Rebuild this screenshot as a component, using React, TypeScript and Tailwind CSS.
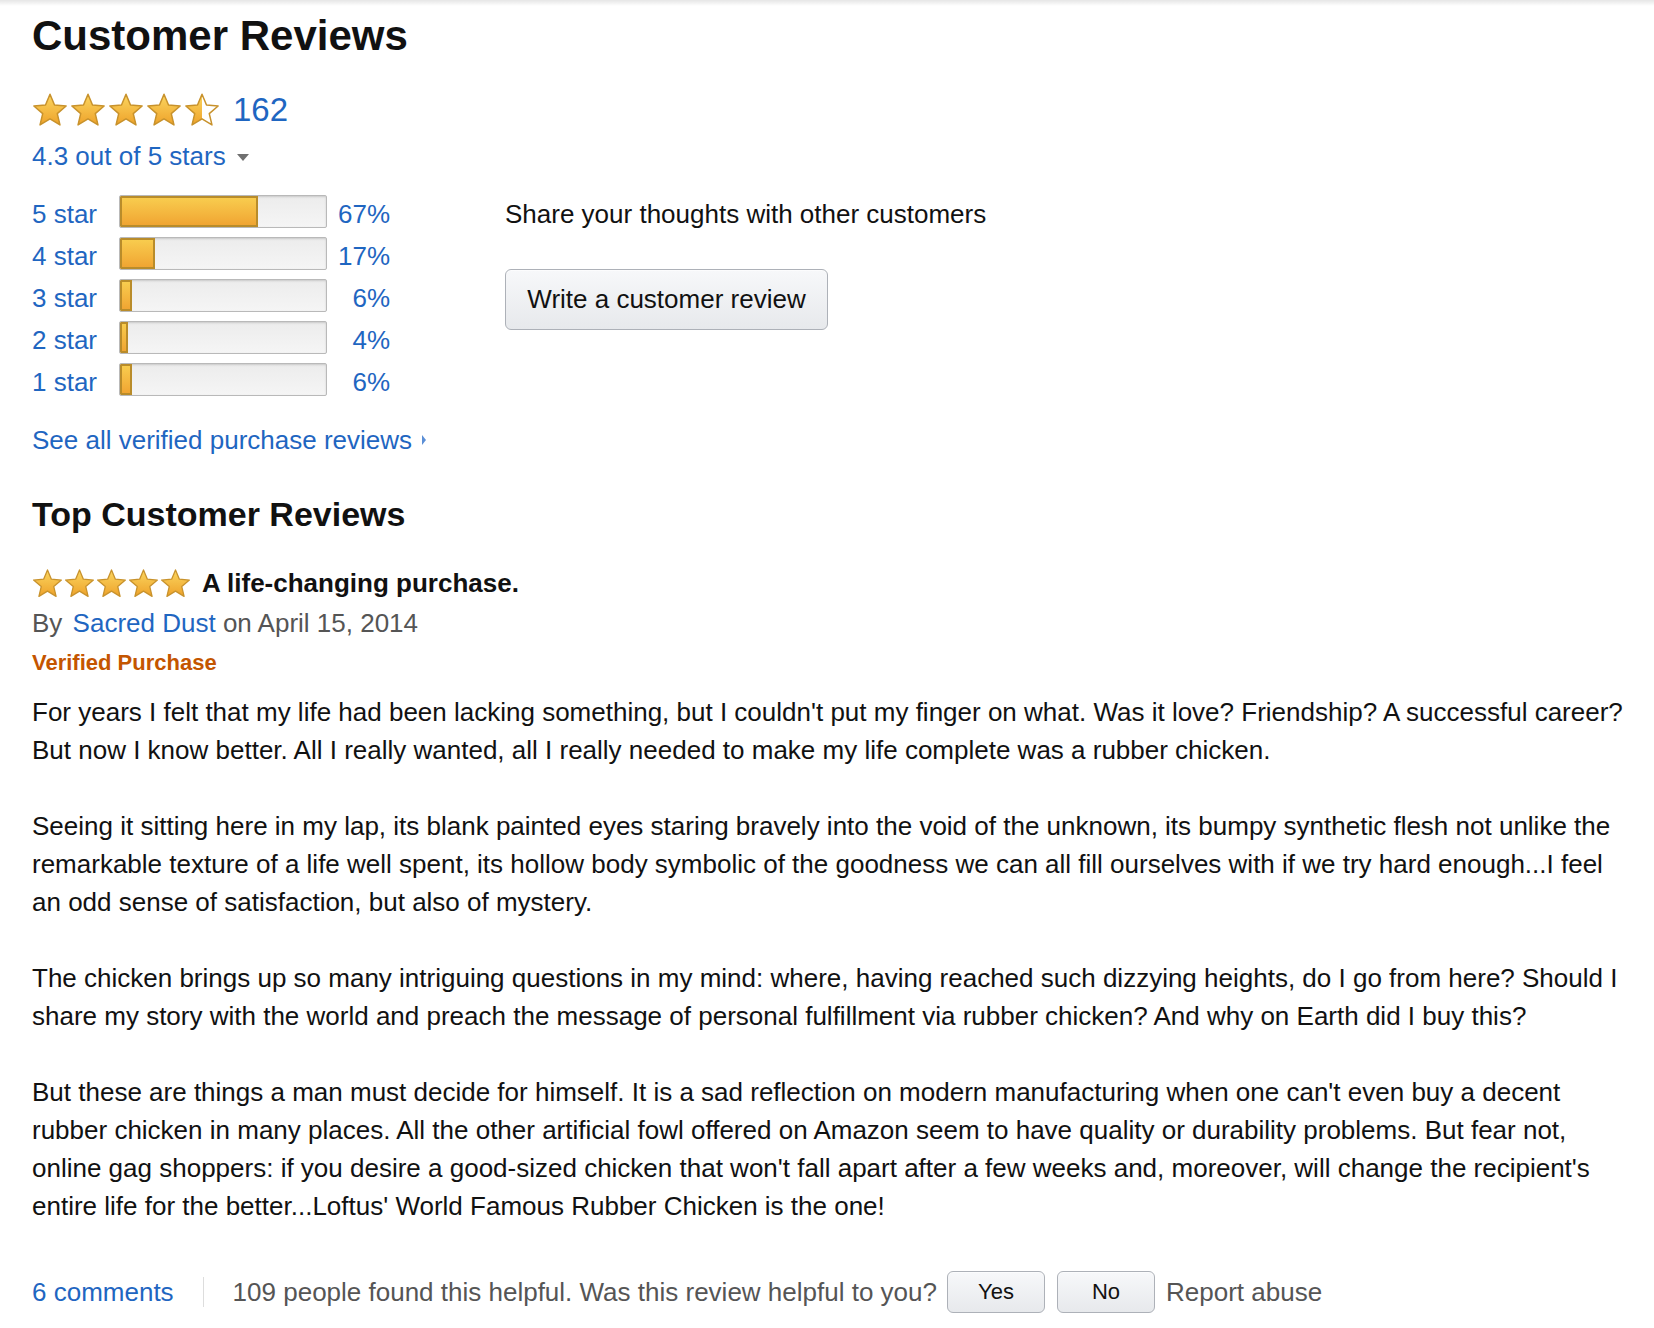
import { useId } from "react";

const histogram = [
  { label: "5 star", pct: 67 },
  { label: "4 star", pct: 17 },
  { label: "3 star", pct: 6 },
  { label: "2 star", pct: 4 },
  { label: "1 star", pct: 6 },
];

const STAR_POINTS =
  "12,1.5 15,8.67 22.75,9.31 16.85,14.38 18.64,21.94 12,17.9 5.36,21.94 7.15,14.38 1.25,9.31 9,8.67";

function Star({ size, half = false }: { size: number; half?: boolean }) {
  const id = useId().replace(/:/g, "");
  return (
    <svg width={size} height={size} viewBox="0 0 24 24" className="block">
      <defs>
        <linearGradient id={`g${id}`} x1="0" y1="0" x2="0" y2="1">
          <stop offset="0%" stopColor="#fbd660" />
          <stop offset="100%" stopColor="#eea22a" />
        </linearGradient>
        <clipPath id={`c${id}`}>
          <rect x="0" y="0" width="12" height="24" />
        </clipPath>
      </defs>
      <polygon points={STAR_POINTS} fill="#ffffff" />
      <polygon
        points={STAR_POINTS}
        fill={`url(#g${id})`}
        clipPath={half ? `url(#c${id})` : undefined}
      />
      <polygon
        points={STAR_POINTS}
        fill="none"
        stroke="#c8922c"
        strokeWidth="1"
        strokeLinejoin="round"
      />
    </svg>
  );
}

function GrayButton({ children, className }: { children: React.ReactNode; className: string }) {
  return (
    <button
      className={`flex items-center justify-center rounded-[6px] border border-[#adb1b8] bg-gradient-to-b from-[#f7f8fa] to-[#e7e9ec] text-[#111] shadow-[inset_0_1px_0_rgba(255,255,255,0.6)] ${className}`}
    >
      {children}
    </button>
  );
}

export default function App() {
  return (
    <div
      className="min-h-[1328px] bg-white text-[#111]"
      style={{ fontFamily: '"Liberation Sans", Arial, sans-serif' }}
    >
      <div className="h-[6px] bg-gradient-to-b from-black/10 to-transparent" />
      <div className="pl-[32px] pr-[28px]">
        <h2 className="pt-[6px] text-[42px] font-bold leading-[48px]">Customer Reviews</h2>

        <div className="mt-[32px] flex h-[36px] items-center">
          <div className="flex gap-[2px]">
            <Star size={36} />
            <Star size={36} />
            <Star size={36} />
            <Star size={36} />
            <Star size={36} half />
          </div>
          <span className="ml-[13px] text-[33px] leading-[36px] text-[#1f66c1]">162</span>
        </div>

        <div className="mt-[13px] flex h-[30px] items-center text-[26px] leading-[30px] text-[#1f66c1]">
          4.3 out of 5 stars
          <span className="ml-[11px] mt-[2px] h-0 w-0 border-x-[6.5px] border-t-[7px] border-x-transparent border-t-[#707070]" />
        </div>

        <div className="mt-[19px] flex">
          <div className="flex flex-col">
            {histogram.map((row) => (
              <div key={row.label} className="flex h-[42px] items-center text-[26px] leading-[30px] text-[#1f66c1]">
                <span className="mt-[5px] w-[87px]">{row.label}</span>
                <div className="h-[33px] w-[208px] overflow-hidden rounded-[2px] border border-[#b9b9b9] bg-gradient-to-b from-[#ececec] to-[#f5f5f5] shadow-[inset_0_1px_2px_rgba(0,0,0,0.15)]">
                  <div
                    className="h-full rounded-l-[1px] border-[2px] border-[#b98c2a] bg-gradient-to-b from-[#f8cc4e] to-[#f0a532]"
                    style={{ width: `${row.pct}%` }}
                  />
                </div>
                <span className="mt-[5px] w-[63px] text-right">{row.pct}%</span>
              </div>
            ))}
          </div>

          <div className="ml-[115px] pt-[9px]">
            <p className="text-[26px] leading-[30px]">Share your thoughts with other customers</p>
            <GrayButton className="mt-[40px] h-[61px] w-[323px] text-[26px]">
              Write a customer review
            </GrayButton>
          </div>
        </div>

        <div className="mt-[25px] flex items-center text-[26px] leading-[30px] text-[#1f66c1]">
          See all verified purchase reviews
          <span className="ml-[10px] h-0 w-0 border-y-[5px] border-l-[4px] border-y-transparent border-l-[#5b8fd6]" />
        </div>

        <h3 className="mt-[39px] text-[34px] font-bold leading-[40px]">Top Customer Reviews</h3>

        <div className="mt-[34px] flex h-[30px] items-center">
          <div className="flex gap-[1px]">
            <Star size={31} />
            <Star size={31} />
            <Star size={31} />
            <Star size={31} />
            <Star size={31} />
          </div>
          <span className="ml-[11px] text-[26px] font-bold leading-[30px]">A life-changing purchase.</span>
        </div>

        <p className="mt-[10px] text-[26px] leading-[30px] text-[#555]">
          By <span className="ml-[3px] text-[#1f66c1]">Sacred Dust</span> on April 15, 2014
        </p>

        <p className="mt-[12px] text-[22px] font-bold leading-[26px] text-[#c45500]">Verified Purchase</p>

        <div className="mt-[17px] text-[26px] leading-[38px]">
          <p>
            For years I felt that my life had been lacking something, but I couldn't put my finger on what. Was it
            love? Friendship? A successful career? But now I know better. All I really wanted, all I really needed to
            make my life complete was a rubber chicken.
          </p>
          <p className="mt-[38px]">
            Seeing it sitting here in my lap, its blank painted eyes staring bravely into the void of the unknown, its
            bumpy synthetic flesh not unlike the remarkable texture of a life well spent, its hollow body symbolic of
            the goodness we can all fill ourselves with if we try hard enough...I feel an odd sense of satisfaction,
            but also of mystery.
          </p>
          <p className="mt-[38px]">
            The chicken brings up so many intriguing questions in my mind: where, having reached such dizzying
            heights, do I go from here? Should I share my story with the world and preach the message of personal
            fulfillment via rubber chicken? And why on Earth did I buy this?
          </p>
          <p className="mt-[38px]">
            But these are things a man must decide for himself. It is a sad reflection on modern manufacturing when
            one can't even buy a decent
            <br />
            rubber chicken in many places. All the other artificial fowl offered on Amazon seem to have quality or
            durability problems. But fear not, online gag shoppers: if you desire a good-sized chicken that won't fall
            apart after a few weeks and, moreover, will change the recipient's entire life for the better...Loftus'
            World Famous Rubber Chicken is the one!
          </p>
        </div>

        <div className="mt-[46px] flex h-[42px] items-center text-[26px] leading-[30px]">
          <span className="text-[#1f66c1]">6 comments</span>
          <span className="mx-[29px] h-[30px] w-px bg-[#dddddd]" />
          <span className="text-[#555]">109 people found this helpful. Was this review helpful to you?</span>
          <GrayButton className="ml-[10px] h-[42px] w-[98px] text-[22px]">Yes</GrayButton>
          <GrayButton className="ml-[12px] h-[42px] w-[98px] text-[22px]">No</GrayButton>
          <span className="ml-[11px] text-[#555]">Report abuse</span>
        </div>
      </div>
    </div>
  );
}
